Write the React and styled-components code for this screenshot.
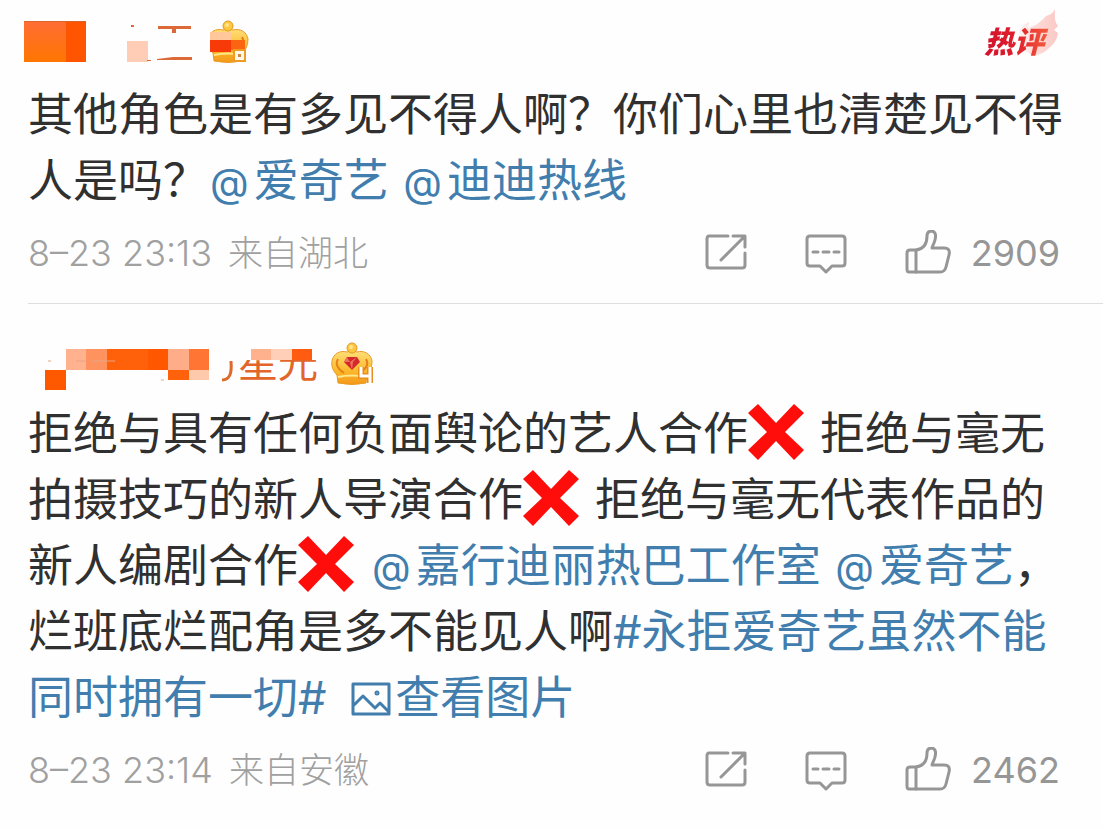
import React from "react";
import styled, { createGlobalStyle } from "styled-components";

const GlobalStyle = createGlobalStyle`
  body {
    margin: 0;
    background: #fefefe;
    font-family: Inter, "Noto Sans CJK SC", sans-serif;
  }
`;

const Feed = styled.main`
  padding-left: 28px;
`;

const Post = styled.article`
  padding: 2px 0 16px;
  & + & {
    border-top: 1px solid #dedede;
    padding-top: 23px;
  }
`;

const Header = styled.header`
  display: flex;
  justify-content: space-between;
  align-items: center;
  min-height: 74px;
  padding-right: 43px;
`;

const Author = styled.div`
  display: flex;
  align-items: center;
  height: 48px;
`;

const Mosaic = styled.svg`
  display: block;
  flex: none;
  margin-left: -4px;
`;

const Name = styled.span`
  position: relative;
  height: 48px;
  margin-right: 12px;
  color: #e2662a;
  font-size: 40px;
  line-height: 46px;
`;

const NameCover = styled.svg`
  position: absolute;
  top: 0;
  left: 0;
`;

const HotBadge = styled.span`
  position: relative;
  display: block;
  width: 76px;
  height: 80px;
`;

const Flame = styled.svg`
  position: absolute;
  right: 0;
  top: 4px;
`;

const HotText = styled.strong`
  position: relative;
  display: inline-block;
  margin-top: 22px;
  padding-right: 6px;
  font-size: 30px;
  line-height: 36px;
  font-weight: 900;
  font-style: italic;
  color: transparent;
  background: linear-gradient(90deg, #d3102c, #e0202c 50%, #f4603f);
  background-clip: text;
`;

const Text = styled.p`
  margin: 0;
  padding-right: 28px;
  color: #303030;
  font-size: 45px;
  line-height: 66px;
`;

const Link = styled.a`
  color: #417eae;
  text-decoration: none;
`;

const At = styled.span`
  margin: 0 5px 0 2px;
  font-size: 40px;
  line-height: 48px;
`;

const Cross = styled.svg`
  width: 56px;
  height: 56px;
  margin: 0 16px 0 0;
  vertical-align: -10px;
`;

const Picture = styled.svg`
  width: 40px;
  height: 34px;
  margin: 0 4px 0 12px;
  vertical-align: -2px;
`;

const Footer = styled.footer`
  display: flex;
  justify-content: space-between;
  align-items: center;
  height: 69px;
  margin-top: 4px;
  padding-right: 43px;
`;

const Meta = styled.div`
  display: flex;
  gap: 16px;
  color: #a0a0a0;
  font-size: 36px;
  font-weight: 300;
  line-height: 48px;
`;

const Place = styled.span`
  font-size: 35px;
`;

const Actions = styled.div`
  display: flex;
  align-items: center;
  gap: 58px;
`;

const Action = styled.button`
  display: flex;
  align-items: center;
  gap: 20px;
  padding: 0;
  border: 0;
  background: none;
  color: #969696;
  font: 400 36px/48px Inter, sans-serif;
`;

const Line = styled.svg`
  display: block;
  fill: none;
  stroke: #969696;
  stroke-width: 3;
  stroke-linecap: round;
  stroke-linejoin: round;
`;

function Mention({ href, name }) {
  return (
    <Link href={href}>
      <At>@</At>
      {name}
    </Link>
  );
}

function CrossMark() {
  return (
    <Cross viewBox="0 0 56 56" role="img" aria-label="❌">
      <path d="M10 0 28 19 46 0 56 9 37 28 56 46 46 56 28 37 10 56 0 46 19 28 0 9Z" fill="#ff0d0a" />
    </Cross>
  );
}

function PostFooter({ date, place, likes }) {
  return (
    <Footer>
      <Meta>
        <time>{date}</time>
        <Place>{place}</Place>
      </Meta>
      <Actions>
        <Action type="button" aria-label="转发">
          <Line width="42" height="44" viewBox="0 0 42 44">
            <path d="M23 5H4Q2 5 2 8V34Q2 37 5 37H37Q40 37 40 34V22" />
            <path d="M28 5H40V16M39 6 16 29" />
          </Line>
        </Action>
        <Action type="button" aria-label="评论">
          <Line width="42" height="44" viewBox="0 0 42 44">
            <path d="M5 5H37Q40 5 40 8V32Q40 35 37 35H27L21 41 15 35H5Q2 35 2 32V8Q2 5 5 5Z" />
            <path d="M8 21H13M18 21H24M29 21H34" />
          </Line>
        </Action>
        <Action type="button">
          <Line width="46" height="46" viewBox="0 0 46 46" aria-hidden="true">
            <path d="M11 20C19 19 22 13 22 6C22 2 24 1 27 1C31 2 31 6 30 10C29 14 27 17 27 18H39C44 18 45 21 44 25L41 37C40 41 38 42 35 42H4Q2 42 2 39V23Q2 20 5 20Z" />
            <path d="M11 20V42" />
          </Line>
          {likes}
        </Action>
      </Actions>
    </Footer>
  );
}

function Crown({ hidden }) {
  const id = hidden ? "gold-a" : "gold-b";
  return (
    <svg width="44" height="44" viewBox="0 0 44 44" aria-hidden="true">
      <defs>
        <linearGradient id={id} x1="0" y1="0" x2="0" y2="1">
          <stop offset="0" stopColor="#ffe07a" />
          <stop offset=".6" stopColor="#fbb92b" />
          <stop offset="1" stopColor="#f5971b" />
        </linearGradient>
      </defs>
      <path
        d="M8 41 7 33C3 29 1 24 2 19C3 12 10 8 17 10Q22 7 27 10C34 8 41 12 42 19C42 25 40 29 37 33L36 41Q22 44 8 41Z"
        fill={`url(#${id})`}
        stroke="#e99b22"
      />
      <path d="M14 31C8 27 5 22 8 17M30 31C36 27 39 22 36 17" fill="none" stroke="#e9811b" strokeWidth="2" />
      <path d="M8 35Q22 32 36 35" fill="none" stroke="#ffe88a" strokeWidth="2" />
      <circle cx="22" cy="6" r="5" fill="#ffc63f" stroke="#e29a26" />
      <circle cx="21" cy="5" r="2" fill="#ffe58f" />
      {hidden ? (
        <>
          <path d="M0 8H9L4 14V32H0Z" fill="#fefefe" />
          <path d="M4 12H25V20H4Z" fill="#ffc79a" />
          <path d="M4 20H25V32H4Z" fill="#f73a08" />
          <path d="M25 20H39V30H25Z" fill="#fb6410" />
          <path d="M28 30H39V41H28Z" fill="#fff8e8" stroke="#ee9b25" strokeWidth="2" />
          <path d="M32 34H35V37H32Z" fill="#d8843a" />
        </>
      ) : (
        <>
          <path d="M17 15H27L30 20 22 28 14 20Z" fill="#d5282c" />
          <path d="M17 15 20 20H14M20 20 22 28 23 20 27 15" fill="#ee6f5b" />
          <path d="M31 25V34H41M40 25V41" fill="none" stroke="#e98d1e" strokeWidth="6" />
          <path d="M31 25V34H41M40 25V41" fill="none" stroke="#fff" strokeWidth="3" />
        </>
      )}
    </svg>
  );
}

export default function App() {
  return (
    <>
      <GlobalStyle />
      <Feed>
        <Post>
          <Header>
            <Author>
              <Mosaic width="182" height="48" viewBox="24 18 182 48" aria-hidden="true">
                <defs>
                  <linearGradient id="block" x1="0" y1="0" x2="0" y2="1">
                    <stop offset="0" stopColor="#ff6d35" />
                    <stop offset="1" stopColor="#ff7600" />
                  </linearGradient>
                </defs>
                <path d="M24 21H66V62H24Z" fill="url(#block)" />
                <path d="M66 21H86V62H66Z" fill="#ff5500" />
                <path d="M24 21H86V22H24Z" fill="#d9642c" />
                <path d="M127 41H148V62H127Z" fill="#ffcdb6" />
                <path d="M131 25H134V27H131ZM147 60H151V61H147ZM158 26H191V29H176V33H172V29H158ZM157 59 173 57H192V60H157Z" fill="#dc6a38" />
              </Mosaic>
              <Crown hidden />
            </Author>
            <HotBadge>
              <Flame width="48" height="56" viewBox="0 0 48 56" aria-hidden="true">
                <defs>
                  <linearGradient id="flame" x1="0" y1="0" x2="1" y2="0">
                    <stop offset="0" stopColor="#fffafa" />
                    <stop offset=".5" stopColor="#fdd9d5" />
                    <stop offset="1" stopColor="#fbc9c6" />
                  </linearGradient>
                </defs>
                <path d="M4 36C5 24 11 18 17 16L16 22C24 20 31 14 34 10C38 9 41 7 43 3C43 11 42 15 46 20L42 24L46 27C45 34 41 39 37 42C32 47 27 49 20 50Z" fill="url(#flame)" />
              </Flame>
              <HotText>热评</HotText>
            </HotBadge>
          </Header>
          <Text>
            其他角色是有多见不得人啊？你们心里也清楚见不得人是吗？<Mention href="#iqiyi" name="爱奇艺" />{" "}
            <Mention href="#didi" name="迪迪热线" />
          </Text>
          <PostFooter date="8–23 23:13" place="来自湖北" likes="2909" />
        </Post>
        <Post>
          <Header>
            <Author>
              <Mosaic width="214" height="48" viewBox="24 340 214 48" overflow="visible" aria-hidden="true">
                <path d="M66 349H86V370H66Z" fill="#ffb28d" />
                <path d="M86 349H107V370H86Z" fill="#ff935f" />
                <path d="M107 349H148V370H107Z" fill="#ff610b" />
                <path d="M148 349H168V370H148Z" fill="#ff5800" />
                <path d="M168 349H189V370H168Z" fill="#ffad88" />
                <path d="M189 349H209V370H189Z" fill="#ff7533" />
                <path d="M45 370H66V390H45Z" fill="#ff5900" />
                <path d="M168 370H189V380H168Z" fill="#ff620a" />
                <path d="M189 370H209V380H189Z" fill="#ffc9ab" />
                <path d="M48 361H51M76 361H86M92 361H115M161 380H164" stroke="#e6a588" />
                <path d="M231 361C232 373 230 380 222 380" fill="none" stroke="#dc6a2d" strokeWidth="3" />
              </Mosaic>
              <Name>
                星光
                <NameCover width="80" height="48" viewBox="0 0 80 48" aria-hidden="true">
                  <path d="M0 0H80V20H0Z" fill="#fefefe" />
                  <path d="M13 9H33V20H13Z" fill="#ffb08c" />
                  <path d="M33 9H54V20H33Z" fill="#ffd0b7" />
                  <path d="M54 9H74V20H54Z" fill="#ff5c12" />
                </NameCover>
              </Name>
              <Crown />
            </Author>
          </Header>
          <Text>
            拒绝与具有任何负面舆论的艺人合作<CrossMark />拒绝与毫无拍摄技巧的新人导演合作<CrossMark />
            拒绝与毫无代表作品的新人编剧合作<CrossMark />
            <Mention href="#studio" name="嘉行迪丽热巴工作室" /> <Mention href="#iqiyi" name="爱奇艺" />
            ，烂班底烂配角是多不能见人啊<Link href="#topic">#永拒爱奇艺虽然不能同时拥有一切#</Link>{" "}
            <Link href="#picture">
              <Picture viewBox="0 0 40 34" fill="none" stroke="#417eae" strokeWidth="3" strokeLinejoin="round" aria-hidden="true">
                <path d="M2 2H38V32H2ZM2 24 12 14 24 26 29 21 38 30" />
                <circle cx="26" cy="11" r="1" />
              </Picture>
              查看图片
            </Link>
          </Text>
          <PostFooter date="8–23 23:14" place="来自安徽" likes="2462" />
        </Post>
      </Feed>
    </>
  );
}
